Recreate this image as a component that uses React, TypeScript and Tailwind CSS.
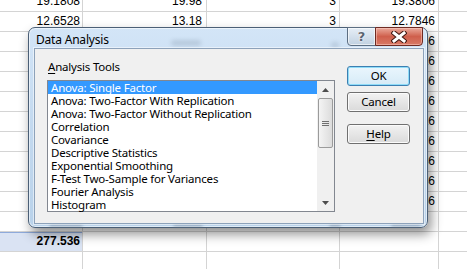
import React from "react";

const items = [
  "Anova: Single Factor",
  "Anova: Two-Factor With Replication",
  "Anova: Two-Factor Without Replication",
  "Correlation",
  "Covariance",
  "Descriptive Statistics",
  "Exponential Smoothing",
  "F-Test Two-Sample for Variances",
  "Fourier Analysis",
  "Histogram",
];

type Row = { a?: string; b?: string; c?: string; d?: string; sel?: boolean };

const rows: Row[] = [
  { a: "19.1808", b: "19.98", c: "3", d: "19.3806" },
  { a: "12.6528", b: "13.18", c: "3", d: "12.7846" },
  { d: "18.2456" },
  { d: "14.4626" },
  { d: "11.3106" },
  { d: "16.2576" },
  { d: "13.2016" },
  { d: "15.5776" },
  { d: "17.1786" },
  { d: "12.1836" },
  { d: "14.6566" },
  {},
  { a: "277.536", sel: true },
  {},
];

function Sheet() {
  return (
    <div className="-mt-[8px] font-['Liberation_Sans',sans-serif] text-[12px] text-black">
      {rows.map((r, i) => (
        <div
          key={i}
          className="grid h-[20px] grid-cols-[83px_124px_133px_99px_28px] border-b border-[#d4d4d4]"
        >
          <div
            className={
              r.sel
                ? "flex items-end justify-end border-r border-[#d4d4d4] bg-[#dae3f3] pb-[2px] pr-[2px] font-bold leading-[15px] shadow-[inset_0_1px_0_#8eaadb]"
                : "flex items-end justify-end border-r border-[#d4d4d4] pb-[2px] pr-[2px] leading-[15px]"
            }
          >
            {r.a}
          </div>
          <div className="flex items-end justify-end border-r border-[#d4d4d4] pb-[2px] pr-[4px] leading-[15px]">
            {r.b}
          </div>
          <div className="flex items-end justify-end border-r border-[#d4d4d4] pb-[2px] pr-[3px] leading-[15px]">
            {r.c}
          </div>
          <div className="flex items-end justify-end border-r border-[#d4d4d4] pb-[2px] pr-[3px] leading-[15px]">
            {r.d}
          </div>
          <div />
        </div>
      ))}
    </div>
  );
}

function UpArrow() {
  return (
    <svg width="7" height="4" viewBox="0 0 7 4">
      <path d="M0 4 L3.5 0 L7 4 Z" fill="#4d4d4d" />
    </svg>
  );
}
function DownArrow() {
  return (
    <svg width="7" height="4" viewBox="0 0 7 4">
      <path d="M0 0 L3.5 4 L7 0 Z" fill="#4d4d4d" />
    </svg>
  );
}

function Scrollbar() {
  return (
    <div className="flex w-[17px] flex-col bg-[#f0f0f0]">
      <div className="flex h-[17px] items-center justify-center">
        <UpArrow />
      </div>
      <div className="mx-[1px] flex h-[50px] items-center justify-center rounded-[2px] border border-[#9b9b9b] bg-gradient-to-r from-[#f4f4f4] to-[#dcdcdc]">
        <svg width="7" height="5" viewBox="0 0 7 5">
          <rect x="0" y="0" width="7" height="1" fill="#6f6f6f" />
          <rect x="0" y="2" width="7" height="1" fill="#6f6f6f" />
          <rect x="0" y="4" width="7" height="1" fill="#6f6f6f" />
        </svg>
      </div>
      <div className="flex-1" />
      <div className="flex h-[17px] items-center justify-center">
        <DownArrow />
      </div>
    </div>
  );
}

function Btn({ children, def }: { children: React.ReactNode; def?: boolean }) {
  return (
    <div
      className={
        def
          ? "flex h-[20px] w-[63px] items-center justify-center rounded-[3px] border border-[#3c7fb1] bg-gradient-to-b from-[#eaf6fd] to-[#d6ebf7] leading-[14px] shadow-[inset_0_0_0_1px_#8fdcf8]"
          : "flex h-[20px] w-[63px] items-center justify-center rounded-[3px] border border-[#707070] bg-gradient-to-b from-[#f2f2f2] to-[#dadada] leading-[14px] shadow-[inset_0_0_0_1px_#fbfbfb]"
      }
    >
      {children}
    </div>
  );
}

function Dialog() {
  return (
    <div className="absolute left-[28px] top-[27px] flex h-[201px] w-[400px] flex-col rounded-[7px] border border-[#4b5f76] bg-gradient-to-b from-[#d3e5f7] via-[#c3d9ef] to-[#b9d2ea] font-['Noto_Sans',sans-serif] text-[11.5px] tracking-[-0.2px] text-black shadow-[inset_0_0_0_1px_rgba(255,255,255,0.55),3px_6px_12px_rgba(0,0,0,0.45)]">
      {/* blurred background reflections */}
      <div className="absolute left-[142px] top-[12px] h-[6px] w-[30px] rounded-full bg-[#7d8fa3] opacity-30 blur-[2px]" />
      <div className="absolute left-[302px] top-[14px] h-[6px] w-[8px] rounded-full bg-[#7d8fa3] opacity-30 blur-[2px]" />
      <div className="absolute left-[20px] top-[195px] h-[4px] w-[34px] rounded-full bg-[#6d8094] opacity-40 blur-[1.5px]" />
      <div className="absolute left-[144px] top-[195px] h-[4px] w-[30px] rounded-full bg-[#6d8094] opacity-40 blur-[1.5px]" />
      <div className="absolute left-[300px] top-[195px] h-[4px] w-[12px] rounded-full bg-[#6d8094] opacity-40 blur-[1.5px]" />
      <div className="absolute left-[362px] top-[195px] h-[4px] w-[30px] rounded-full bg-[#6d8094] opacity-40 blur-[1.5px]" />

      <div className="relative flex h-[20px] items-center pl-[7px] pt-[3px]">
        <span className="text-[12px] leading-[15px]">Data Analysis</span>
        <div className="absolute right-[4px] top-[-1px] flex h-[19px]">
          <div className="flex w-[29px] items-center justify-center rounded-bl-[4px] border border-[#5c6e82] bg-gradient-to-b from-[#e6eef6] via-[#d4e0ec] to-[#c1d1e1] shadow-[inset_0_0_0_1px_rgba(255,255,255,0.6)]">
            <span className="font-['DejaVu_Sans',sans-serif] text-[13px] font-bold leading-[13px] text-[#5b6472] [text-shadow:0_0_1px_#fff,0_0_2px_#fff]">
              ?
            </span>
          </div>
          <div className="-ml-[1px] flex w-[48px] items-center justify-center rounded-br-[4px] border border-[#6e2a22] bg-gradient-to-b from-[#e9a99b] via-[#cf5f4c] to-[#d87966] shadow-[inset_0_0_0_1px_rgba(255,210,200,0.5)]">
            <svg width="16" height="12" viewBox="0 0 16 12">
              <path d="M3 2 L13 10 M13 2 L3 10" stroke="#3d1510" strokeWidth="5" strokeLinecap="square" />
              <path d="M3 2 L13 10 M13 2 L3 10" stroke="#ffffff" strokeWidth="3" strokeLinecap="square" />
            </svg>
          </div>
        </div>
      </div>

      <div className="relative mb-[3px] ml-[5px] mr-[3px] flex flex-1 items-start border border-[#8da2ba] bg-[#f0f0f0] pl-[12px] pt-[10px] shadow-[0_0_0_1px_rgba(255,255,255,0.5)]">
        <div className="flex flex-col">
          <div className="pl-[1px] leading-[15px]">
            <span className="underline underline-offset-[2px]">A</span>nalysis Tools
          </div>
          <div className="mt-[6px] flex h-[132px] w-[288px] border border-[#828790] bg-white">
            <div className="flex flex-1 flex-col">
              {items.map((t, i) => (
                <div
                  key={t}
                  className={
                    i === 0
                      ? "h-[13px] whitespace-nowrap bg-[#3399ff] pl-[3px] leading-[13px] text-white"
                      : "h-[13px] whitespace-nowrap pl-[3px] leading-[13px]"
                  }
                >
                  {t}
                </div>
              ))}
            </div>
            <Scrollbar />
          </div>
        </div>
        <div className="ml-[12px] mt-[7px] flex flex-col">
          <Btn def>OK</Btn>
          <div className="mt-[6px]">
            <Btn>Cancel</Btn>
          </div>
          <div className="mt-[12px]">
            <Btn>
              <span>
                <span className="underline underline-offset-[2px]">H</span>elp
              </span>
            </Btn>
          </div>
        </div>
      </div>
    </div>
  );
}

export default function App() {
  return (
    <div className="relative h-[269px] w-[467px] overflow-hidden bg-white">
      <Sheet />
      <Dialog />
    </div>
  );
}
